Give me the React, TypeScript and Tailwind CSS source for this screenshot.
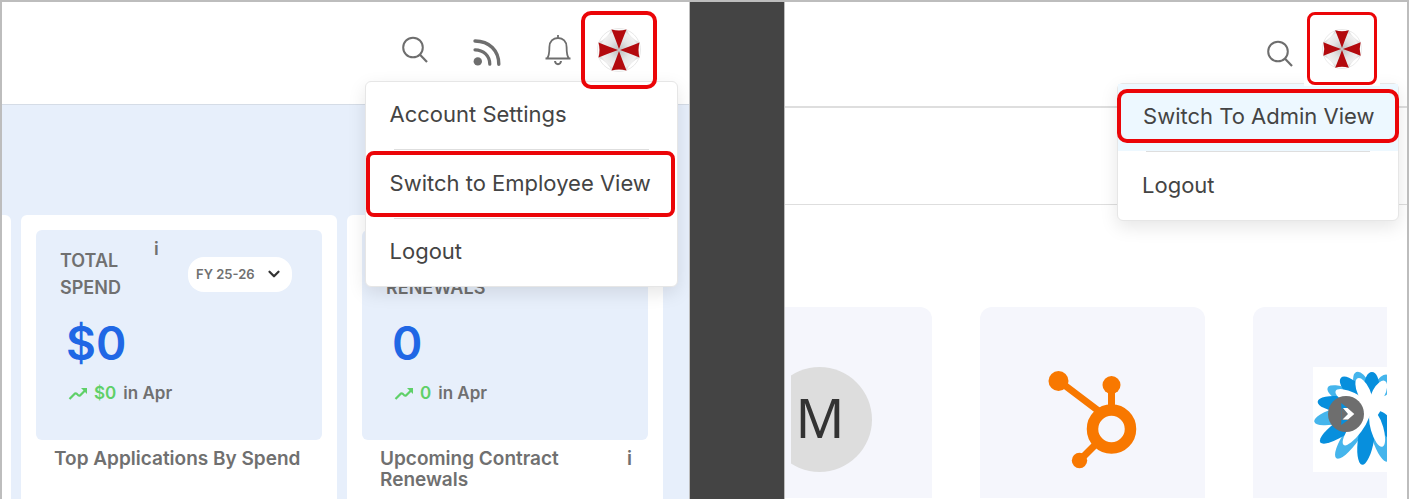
import React from 'react';
import { ChevronDown } from 'lucide-react';

const SearchIcon = () => (
  <svg width="28" height="28" viewBox="0 0 28 28" fill="none" stroke="#6e6e6e" strokeWidth="2">
    <circle cx="12" cy="11.5" r="9.8" />
    <path d="M18.8 18.6 26 26" strokeWidth="2.2" />
  </svg>
);

const FeedIcon = () => (
  <svg width="28" height="28" viewBox="0 0 28 28" fill="none" stroke="#6e6e6e">
    <circle cx="4.8" cy="23.4" r="4.2" fill="#6e6e6e" stroke="none" />
    <path d="M2 11.8c8.6 0 14.8 6.2 14.8 14.4" strokeWidth="3.2" strokeLinecap="round" />
    <path d="M2 3c14.4 0 23.8 9.6 23.8 23.2" strokeWidth="3.4" strokeLinecap="round" />
  </svg>
);

const BellIcon = () => (
  <svg width="26" height="32" viewBox="0 0 26 32" fill="none" stroke="#6e6e6e" strokeWidth="1.8">
    <path d="M13 1v3M.5 24.5h25M2 24.5c2-2 2.4-6 2.4-11.5 0-5.5 3.6-9 8.6-9s8.6 3.5 8.6 9c0 5.5.4 9.5 2.4 11.5" />
    <path d="M10 27c.3 2.4 1.4 3.2 3 3.2s2.7-.8 3-3.2" strokeWidth="2" />
  </svg>
);

const UmbrellaLogo = ({ className }: { className: string }) => (
  <svg viewBox="0 0 44 44" className={className}>
    <defs>
      <radialGradient id="silver">
        <stop offset="0.1" stopColor="#c4c4c4" />
        <stop offset="0.5" stopColor="#e4e4e4" />
        <stop offset="0.85" stopColor="#f0f0f0" />
        <stop offset="1" stopColor="#d8d8d8" />
      </radialGradient>
    </defs>
    <circle cx="22" cy="22" r="21.5" fill="#fff" stroke="#e8e8e8" />
    <path d="M14.5 1.5Q22 4 29.5 1.5Q33.5 10 42.5 14.5Q40 22 42.5 29.5Q33.5 34 29.5 42.5Q22 40 14.5 42.5Q10.5 34 1.5 29.5Q4 22 1.5 14.5Q10.5 10 14.5 1.5Z" fill="url(#silver)" />
    <g fill="#b30a0e">
      <path d="M22 21Q18 10 14.5 1.5Q22 3.5 29.5 1.5Q26 10 22 21Z" />
      <path d="M23 22Q34 18 42.5 14.5Q40.5 22 42.5 29.5Q34 26 23 22Z" />
      <path d="M22 23Q26 34 29.5 42.5Q22 40.5 14.5 42.5Q18 34 22 23Z" />
      <path d="M21 22Q10 26 1.5 29.5Q3.5 22 1.5 14.5Q10 18 21 22Z" />
    </g>
  </svg>
);

const TrendIcon = () => (
  <svg width="20" height="14" viewBox="0 0 20 14" fill="none" stroke="#5fd068" strokeWidth="2.2">
    <path d="M1.5 13 7 7.5Q8.5 7 9.5 8.5T12 9.5L17 4.5" />
    <path d="M13 2H19V8Z" fill="#5fd068" stroke="none" />
  </svg>
);

const HubLogo = () => (
  <svg width="90" height="100" viewBox="0 0 90 100" fill="none" stroke="#f87800">
    <circle cx="63.5" cy="59" r="19" strokeWidth="11.5" />
    <path d="M11 11 52 42M63.5 15V38M32 90 48 74" strokeWidth="7" />
    <g fill="#f87800" stroke="none">
      <circle cx="10.5" cy="11" r="10" />
      <circle cx="63.5" cy="15" r="9" />
      <circle cx="31.5" cy="90.5" r="7.7" />
    </g>
  </svg>
);

const petals = [
  { x: 225, y: 24, color: '#45b5ec' },
  { x: 130, y: 15, color: '#45b5ec' },
  { x: 44, y: 62, color: '#45b5ec' },
  { x: 4, y: 164, color: '#45b5ec' },
  { x: 70, y: 274, color: '#45b5ec' },
  { x: 224, y: 284, color: '#45b5ec' },
  { x: 177, y: 15, color: '#078fdd' },
  { x: 84, y: 32, color: '#078fdd' },
  { x: 14, y: 104, color: '#078fdd' },
  { x: 22, y: 226, color: '#078fdd' },
  { x: 147, y: 293, color: '#078fdd' },
  { x: 280, y: 240, color: '#078fdd' },
  { x: 134, y: 34, color: '#fff' },
  { x: 216, y: 42, color: '#fff' },
  { x: 68, y: 72, color: '#fff' },
  { x: 92, y: 234, color: '#fff' },
  { x: 208, y: 239, color: '#fff' },
  { x: 260, y: 90, color: '#fff' },
];

// Petals are widest past the middle, so each one starts a little way out
const FlowerLogo = () => (
  <svg width="105" height="105" viewBox="0 0 315 315" className="shrink-0 bg-white">
    {petals.map(({ x, y, color }) => {
      const length = Math.hypot(x - 174, y - 122);
      const angle = (Math.atan2(y - 122, x - 174) * 180) / Math.PI;
      return (
        <ellipse
          key={`${x}-${y}`}
          cx={length * 0.54}
          cy="0"
          rx={length * 0.46}
          ry={color === '#fff' ? 19 : 24}
          fill={color}
          transform={`translate(174 122) rotate(${angle})`}
        />
      );
    })}
    <circle cx="176" cy="122" r="28" fill="#fff" />
  </svg>
);

interface StatCardProps {
  title: string[];
  value: string;
  change: string;
  caption: string;
  captionInfo?: boolean;
  children?: React.ReactNode;
}

const StatCard: React.FC<StatCardProps> = ({ title, value, change, caption, captionInfo, children }) => (
  <section className="w-[316px] shrink-0 rounded-t-md bg-white p-[15px]">
    <div className="h-[210px] rounded-md bg-[#e7effb] px-6 pt-[17px]">
      <div className="flex h-[54px] justify-between">
        <h2 className="text-lg leading-[27px] font-semibold">
          {title.map((line) => (
            <span key={line} className="block">{line}</span>
          ))}
        </h2>
        {children}
      </div>
      <p className="mt-4 pl-[6px] text-[46px] leading-[52px] font-semibold text-[#2067e5]">{value}</p>
      <p className="mt-3 flex items-center gap-[6px] pl-2 text-[17px] leading-6 font-semibold">
        <TrendIcon />
        <span className="text-[#5fd068]">{change}</span>
        <span className="pl-px">in Apr</span>
      </p>
    </div>
    <div className="flex justify-between pt-2 pr-4 pl-[18px] text-[19px] leading-[21px] font-semibold">
      <h3 className="max-w-[248px]">{caption}</h3>
      {captionInfo && <span>i</span>}
    </div>
  </section>
);

const AdminPanel = () => (
  <main className="relative flex min-w-0 flex-[687] flex-col overflow-hidden bg-[#e7effb]">
    <header className="flex h-[103px] shrink-0 items-start justify-end border-b border-[#d5dce6] bg-white pt-[9px] pr-8">
      <div className="flex h-[78px] items-center gap-11 pr-[10px]">
        <button aria-label="Search"><SearchIcon /></button>
        <button aria-label="Feed" className="pt-1"><FeedIcon /></button>
        <button aria-label="Notifications"><BellIcon /></button>
      </div>
      <button aria-label="Profile" className="relative z-20 flex h-[78px] w-[76px] items-center justify-center rounded-[10px] border-4 border-[#eb0508]">
        <UmbrellaLogo className="size-11" />
      </button>
    </header>

    <nav className="absolute top-[79px] right-[11px] z-10 flex w-[313px] flex-col rounded-md border border-[#e6e6e6] bg-white text-[22px] text-[#444] shadow-[0_6px_18px_rgba(0,0,0,0.1)]">
      <button className="h-[67px] px-6 pb-[2px] text-left">Account Settings</button>
      <hr className="mx-7 border-[#dedede]" />
      <button className="my-px mr-[2px] h-[66px] rounded-lg border-4 border-[#eb0508] px-5 pb-[2px] text-left whitespace-nowrap">Switch to Employee View</button>
      <hr className="mx-7 border-[#dedede]" />
      <button className="h-[67px] px-6 pb-[2px] text-left">Logout</button>
    </nav>

    <div className="flex flex-1 gap-[10px] pt-[110px]">
      <div className="w-[9px] shrink-0 rounded-tr-md bg-white" />
      <StatCard title={['TOTAL', 'SPEND']} value="$0" change="$0" caption="Top Applications By Spend">
        <span className="-mt-3 pl-1 text-lg font-semibold">i</span>
        <label className="relative mt-[10px] mr-[6px] block h-[35px] w-[104px]">
          <span className="sr-only">Fiscal year</span>
          <select className="h-full w-full appearance-none rounded-2xl bg-white pl-2 text-[13px] font-semibold">
            <option>FY 25-26</option>
          </select>
          <ChevronDown size={18} strokeWidth={3} className="pointer-events-none absolute top-2 right-[9px] text-[#333]" />
        </label>
      </StatCard>
      <StatCard title={['UPCOMING', 'RENEWALS']} value="0" change="0" caption="Upcoming Contract Renewals" captionInfo />
    </div>
  </main>
);

const EmployeePanel = () => (
  <main className="relative min-w-0 flex-[622] overflow-hidden border-l border-[#bdbdbd] bg-white">
    <header className="flex h-[106px] items-start justify-end border-b-2 border-[#dedede] pt-[10px] pr-[27px]">
      <button aria-label="Search" className="mt-7 mr-[10px]"><SearchIcon /></button>
      <div className="relative z-20 bg-white px-[3px] pb-px">
        <button aria-label="Profile" className="flex h-[73px] w-[70px] items-center justify-center rounded-lg border-3 border-[#eb0508]">
          <UmbrellaLogo className="size-10" />
        </button>
      </div>
    </header>
    <div className="h-[97px] border-b border-[#dedede]" />

    <nav className="absolute top-[81px] right-2 z-10 flex w-[282px] flex-col rounded-md border border-[#e6e6e6] bg-white text-[22px] text-[#444] shadow-[0_6px_18px_rgba(0,0,0,0.1)]">
      <div className="flex h-[67px] flex-col bg-[#edf8ff] pt-[5px]">
        <button className="-mx-px h-[54px] rounded-[10px] border-4 border-[#eb0508] px-[22px] text-left whitespace-nowrap">Switch To Admin View</button>
      </div>
      <hr className="mx-7 border-[#dedede]" />
      <button className="h-[68px] px-6 pb-[2px] text-left">Logout</button>
    </nav>

    <div className="relative mt-[102px] mr-5 flex h-[191px] gap-12 overflow-hidden">
      <article className="w-[147px] shrink-0 rounded-tr-xl bg-[#f5f6fc] pt-[60px] pl-[6px]">
        <div className="flex w-[81px] justify-end overflow-hidden">
          <div className="flex size-[105px] shrink-0 items-center justify-center rounded-full bg-[#ddd] pb-1 font-['Noto_Sans',sans-serif] text-[54px] text-[#333]">M</div>
        </div>
      </article>
      <article className="flex w-[225px] shrink-0 justify-center rounded-t-xl bg-[#f5f6fc] pt-[63px]">
        <HubLogo />
      </article>
      <article className="w-[225px] shrink-0 rounded-t-xl bg-[#f5f6fc] pt-[60px] pl-[60px]">
        <FlowerLogo />
      </article>
      <button aria-label="Next" className="absolute top-[89px] right-[23px]">
        <svg width="36" height="36" viewBox="0 0 36 36">
          <circle cx="18" cy="18" r="18" fill="#6e6e6e" />
          <path d="M13.3 7 20 12.5H13.3ZM13.3 12.5 19.7 18 13.3 24ZM13.3 24H20L13.3 29Z" fill="#078fdd" />
          <path d="M13.3 12.5 19.7 18 13.3 24Z" fill="#6e6e6e" />
          <path d="M15 12H19.5L26.3 18 20 23.5H14.5L20 18Z" fill="#fff" />
        </svg>
      </button>
    </div>
  </main>
);

const App: React.FC = () => (
  <div className="flex min-h-screen border-2 border-b border-[#bdbdbd] bg-[#444] font-['Inter',sans-serif] text-[#707070]">
    <AdminPanel />
    <div className="flex-[95] border-l border-[#bdbdbd]" />
    <EmployeePanel />
  </div>
);

export default App;
